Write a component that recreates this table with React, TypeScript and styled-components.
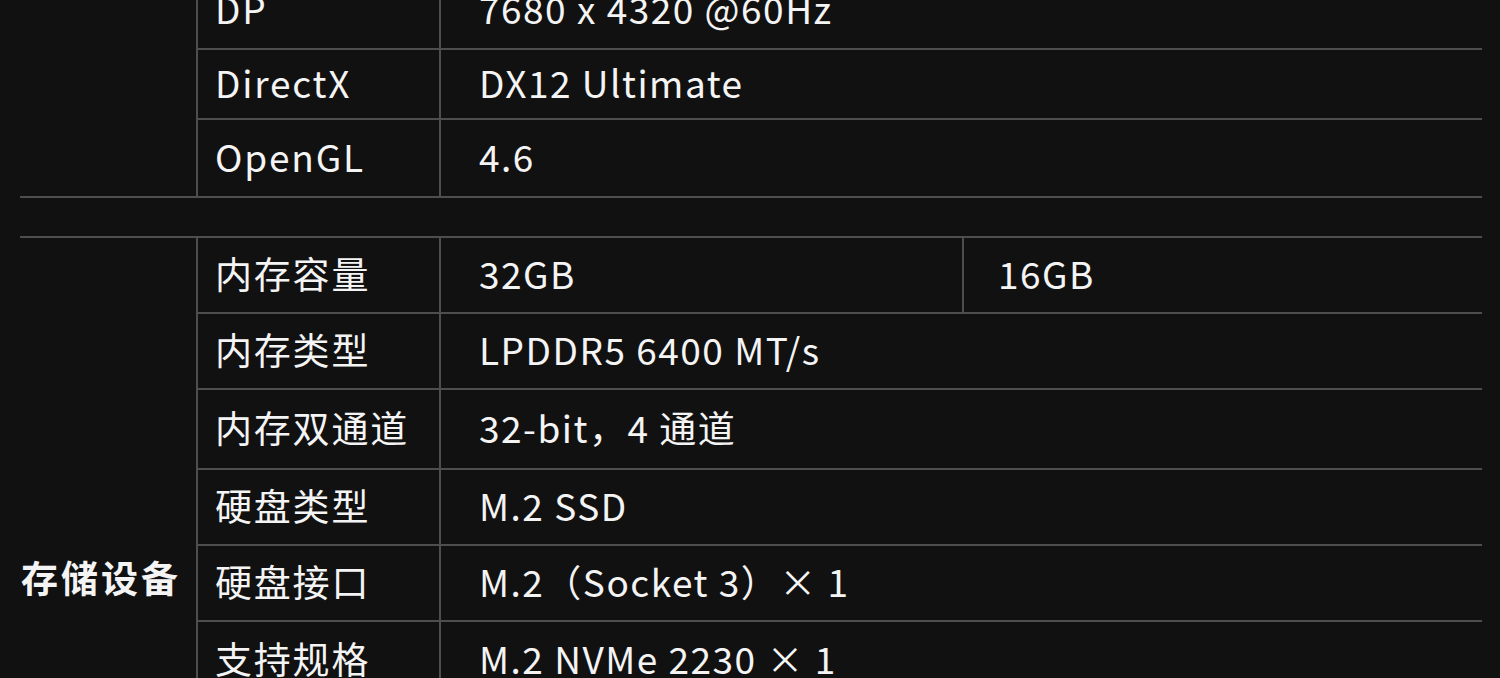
import React from "react";
import styled, { createGlobalStyle } from "styled-components";

const GlobalStyle = createGlobalStyle`
  html, body {
    margin: 0;
    padding: 0;
    background: #111111;
    overflow: hidden;
  }
  body {
    font-family: "Noto Sans CJK SC", "Noto Sans", sans-serif;
    color: #f4f4f4;
  }
`;

const LINE = "#4e4e4e";

const Page = styled.div`
  width: 1462px;
  margin: -30px 0 0 20px;
  display: flex;
  flex-direction: column;
`;

const Section = styled.section<{ $minH?: number }>`
  display: flex;
  border-top: 2px solid ${LINE};
  border-bottom: 2px solid ${LINE};
  min-height: ${(p) => (p.$minH ? `${p.$minH}px` : "auto")};
`;

const Gap = styled.div`
  height: 38px;
`;

const Category = styled.div`
  width: 178px;
  flex-shrink: 0;
  border-right: 2px solid ${LINE};
  display: flex;
  align-items: center;
  padding-left: 1px;
  padding-bottom: 4px;
  box-sizing: border-box;
  font-size: 37px;
  font-weight: 700;
  letter-spacing: 3px;
  white-space: nowrap;
`;

const Rows = styled.div`
  flex: 1;
  display: flex;
  flex-direction: column;
`;

const Row = styled.div<{ $h: number }>`
  display: flex;
  height: ${(p) => p.$h}px;
  box-sizing: border-box;
  &:not(:last-child) {
    border-bottom: 2px solid ${LINE};
  }
`;

const Label = styled.div`
  width: 243px;
  flex-shrink: 0;
  box-sizing: border-box;
  border-right: 2px solid ${LINE};
  padding-left: 17px;
  padding-bottom: 5px;
  display: flex;
  align-items: center;
  font-size: 37px;
  letter-spacing: 1.8px;
  white-space: nowrap;
`;

const Value = styled.div<{ $w?: number; $pad?: number }>`
  flex: ${(p) => (p.$w ? "none" : "1")};
  width: ${(p) => (p.$w ? `${p.$w}px` : "auto")};
  box-sizing: border-box;
  padding-left: ${(p) => p.$pad ?? 38}px;
  padding-bottom: 5px;
  display: flex;
  align-items: center;
  font-size: 37px;
  letter-spacing: 1.5px;
  white-space: nowrap;
  & + & {
    border-left: 2px solid ${LINE};
  }
`;

type Spec = { label: string; values: string[]; h: number };

const display: Spec[] = [
  { label: "DP", values: ["7680 x 4320 @60Hz"], h: 78 },
  { label: "DirectX", values: ["DX12 Ultimate"], h: 70 },
  { label: "OpenGL", values: ["4.6"], h: 76 },
];

const storage: Spec[] = [
  { label: "内存容量", values: ["32GB", "16GB"], h: 76 },
  { label: "内存类型", values: ["LPDDR5 6400 MT/s"], h: 76 },
  { label: "内存双通道", values: ["32-bit，4 通道"], h: 80 },
  { label: "硬盘类型", values: ["M.2 SSD"], h: 76 },
  { label: "硬盘接口", values: ["M.2（Socket 3）× 1"], h: 76 },
  { label: "支持规格", values: ["M.2 NVMe 2230 × 1"], h: 76 },
];

const SpecRows: React.FC<{ items: Spec[] }> = ({ items }) => (
  <Rows>
    {items.map((s) => (
      <Row key={s.label} $h={s.h}>
        <Label>{s.label}</Label>
        {s.values.length > 1 ? (
          <>
            <Value $w={521}>{s.values[0]}</Value>
            <Value $pad={34}>{s.values[1]}</Value>
          </>
        ) : (
          <Value>{s.values[0]}</Value>
        )}
      </Row>
    ))}
  </Rows>
);

export default function App() {
  return (
    <>
      <GlobalStyle />
      <Page>
        <Section>
          <Category />
          <SpecRows items={display} />
        </Section>
        <Gap />
        <Section $minH={682}>
          <Category>存储设备</Category>
          <SpecRows items={storage} />
        </Section>
      </Page>
    </>
  );
}
